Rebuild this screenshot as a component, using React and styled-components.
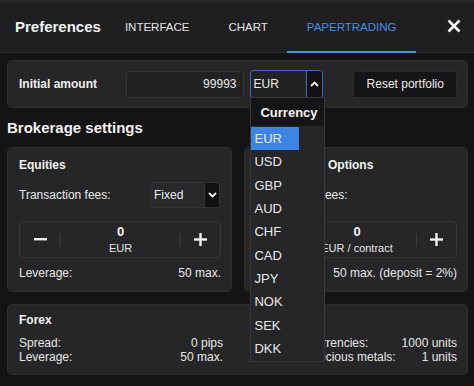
import React from "react";
import styled, { createGlobalStyle } from "styled-components";

const Global = createGlobalStyle`
  html, body { margin: 0; padding: 0; background: #141416; }
  body { font-family: "Liberation Sans", Arial, sans-serif; color: #e8e8e8; width: 474px; height: 386px; overflow: hidden; }
  * { box-sizing: border-box; }
`;

const TopStrip = styled.div`
  height: 2px;
  background: #2a2a2c;
`;

const Header = styled.div`
  display: flex;
  align-items: stretch;
  height: 51px;
  padding-left: 15px;
  background: #1f1f21;
  border-bottom: 1px solid #2f2f31;
`;

const Title = styled.div`
  display: flex;
  align-items: center;
  font-size: 15px;
  font-weight: bold;
  color: #f2f2f2;
  margin-right: 4px;
  padding-bottom: 2px;
`;

const Tab = styled.div`
  display: flex;
  align-items: center;
  padding: 0 19px 0 20px;
  font-size: 11.5px;
  color: ${p => (p.$active ? "#4a8fe0" : "#e4e4e4")};
  border-bottom: 2px solid ${p => (p.$active ? "#4a8fe0" : "transparent")};
  margin-bottom: -1px;
`;

const Close = styled.div`
  margin-left: auto;
  display: flex;
  align-items: center;
  padding-right: 13px;
  padding-bottom: 2px;
`;

const Body = styled.div`
  padding: 7px 6px 0 7px;
`;

const Card = styled.div`
  background: #262628;
  border: 1px solid #2e2e30;
  border-radius: 5px;
  padding: ${p => p.$pad || "9px 10px 11px 11px"};
`;

const AmountCard = styled(Card)`
  display: flex;
  align-items: center;
  height: 48px;
  padding: 0 10px 0 11px;
`;

const BoldLabel = styled.div`
  font-size: 12px;
  font-weight: bold;
  color: #f0f0f0;
  width: ${p => p.$w || "auto"};
  flex-shrink: 0;
`;

const AmountInput = styled.div`
  width: 119px;
  height: 27px;
  background: #222224;
  border: 1px solid #333335;
  border-radius: 3px;
  display: flex;
  align-items: center;
  justify-content: flex-end;
  padding-right: 7px;
  font-size: 12px;
  color: #e8e8e8;
`;

const SelectWrap = styled.div`
  position: relative;
  margin-left: 6px;
`;

const Select = styled.div`
  display: flex;
  width: ${p => p.$w};
  height: ${p => p.$h};
  border: 1px solid ${p => (p.$open ? "#3a6dc0" : "#333335")};
  border-radius: 3px;
  background: ${p => (p.$open ? "#222224" : "#29292b")};
  overflow: hidden;
  font-size: 12px;
  color: #ececec;
`;

const SelectText = styled.div`
  flex: 1;
  display: flex;
  align-items: center;
  padding-left: ${p => p.$pl || "2px"};
`;

const SelectArrow = styled.div`
  width: ${p => p.$w || "16px"};
  display: flex;
  align-items: center;
  justify-content: center;
  background: #111113;
  border-left: 1px solid ${p => (p.$open ? "#3a6dc0" : "#333335")};
`;

const Menu = styled.div`
  position: absolute;
  top: 27px;
  left: 0;
  width: 75px;
  background: #262628;
  border: 1px solid #38383a;
  z-index: 10;
  padding-bottom: 1px;
`;

const MenuHeader = styled.div`
  height: 28px;
  display: flex;
  align-items: center;
  padding-left: 9px;
  background: #151517;
  font-size: 13px;
  font-weight: bold;
  color: #f4f4f4;
`;

const MenuItem = styled.div`
  height: 23.3px;
  width: 48px;
  display: flex;
  align-items: center;
  padding-left: 3px;
  font-size: 13px;
  color: #e8e8e8;
  background: ${p => (p.$sel ? "#3d84e3" : "transparent")};
  margin-top: ${p => (p.$first ? "1px" : "0")};
`;

const ResetButton = styled.div`
  margin-left: 30px;
  width: 104px;
  height: 27px;
  background: #151517;
  border: 1px solid #2c2c2e;
  border-radius: 3px;
  display: flex;
  align-items: center;
  justify-content: center;
  font-size: 12px;
  color: #ececec;
`;

const SectionTitle = styled.div`
  font-size: 15px;
  font-weight: bold;
  color: #f2f2f2;
  line-height: 20px;
  margin: 10px 0 9px 0;
`;

const Grid = styled.div`
  display: grid;
  grid-template-columns: 225px 224px;
  column-gap: 12px;
`;

const CardTitle = styled.div`
  font-size: 12px;
  font-weight: bold;
  color: #f2f2f2;
  line-height: 16px;
`;

const FeeRow = styled.div`
  display: flex;
  align-items: center;
  height: 26px;
  margin-top: 9px;
  font-size: 12px;
`;

const FeeLabel = styled.div`
  width: 131px;
`;

const Stepper = styled.div`
  display: grid;
  grid-template-columns: 41px 1fr 40px;
  height: 37px;
  margin-top: 13px;
  border: 1px solid #363638;
  border-radius: 5px;
  align-items: center;
`;

const StepButton = styled.div`
  display: flex;
  align-items: center;
  justify-content: center;
  height: 12px;
  border-${p => p.$side}: 1px solid #3a3a3c;
`;

const StepValue = styled.div`
  display: flex;
  flex-direction: column;
  align-items: center;
  line-height: 14px;
`;

const StepNum = styled.div`
  font-size: 13px;
  font-weight: bold;
  color: #f4f4f4;
`;

const StepUnit = styled.div`
  font-size: 11px;
  color: #e4e4e4;
  margin-top: 2px;
`;

const InfoRow = styled.div`
  display: flex;
  justify-content: space-between;
  font-size: 12px;
  line-height: 14px;
  margin-top: ${p => p.$mt || "0"};
  color: #e6e6e6;
`;

const ForexCard = styled(Card)`
  margin-top: 12px;
  padding: 7px 10px 10px 11px;
`;

const ForexGrid = styled.div`
  display: grid;
  grid-template-columns: 204px 150px;
  justify-content: space-between;
  margin-top: 8px;
`;

const Minus = () => (
  <svg width="13" height="3" viewBox="0 0 13 3"><rect width="13" height="2.4" fill="#f2f2f2" /></svg>
);
const Plus = () => (
  <svg width="13" height="13" viewBox="0 0 13 13">
    <rect x="5.3" width="2.4" height="13" fill="#f2f2f2" />
    <rect y="5.3" width="13" height="2.4" fill="#f2f2f2" />
  </svg>
);
const Chevron = ({ up }) => (
  <svg width="9" height="6" viewBox="0 0 9 6">
    <path d={up ? "M1 5 L4.5 1.5 L8 5" : "M1 1 L4.5 4.5 L8 1"} stroke="#f2f2f2" strokeWidth="1.8" fill="none" />
  </svg>
);

function StepperBox({ unit }) {
  return (
    <Stepper>
      <StepButton $side="right"><Minus /></StepButton>
      <StepValue>
        <StepNum>0</StepNum>
        <StepUnit>{unit}</StepUnit>
      </StepValue>
      <StepButton $side="left"><Plus /></StepButton>
    </Stepper>
  );
}

const currencies = ["EUR", "USD", "GBP", "AUD", "CHF", "CAD", "JPY", "NOK", "SEK", "DKK"];

export default function App() {
  return (
    <>
      <Global />
      <TopStrip />
      <Header>
        <Title>Preferences</Title>
        <Tab>INTERFACE</Tab>
        <Tab>CHART</Tab>
        <Tab $active>PAPERTRADING</Tab>
        <Close>
          <svg width="14" height="14" viewBox="0 0 14 14">
            <path d="M1.5 1.5 L12.5 12.5 M12.5 1.5 L1.5 12.5" stroke="#f4f4f4" strokeWidth="2.6" />
          </svg>
        </Close>
      </Header>
      <Body>
        <AmountCard>
          <BoldLabel $w="107px">Initial amount</BoldLabel>
          <AmountInput>99993</AmountInput>
          <SelectWrap>
            <Select $w="73px" $h="28px" $open>
              <SelectText>EUR</SelectText>
              <SelectArrow $open><Chevron up /></SelectArrow>
            </Select>
            <Menu>
              <MenuHeader>Currency</MenuHeader>
              {currencies.map((c, i) => (
                <MenuItem key={c} $sel={i === 0} $first={i === 0}>{c}</MenuItem>
              ))}
            </Menu>
          </SelectWrap>
          <ResetButton>Reset portfolio</ResetButton>
        </AmountCard>

        <SectionTitle>Brokerage settings</SectionTitle>

        <Grid>
          <Card>
            <CardTitle>Equities</CardTitle>
            <FeeRow>
              <FeeLabel>Transaction fees:</FeeLabel>
              <Select $w="70px" $h="26px">
                <SelectText $pl="3px">Fixed</SelectText>
                <SelectArrow $w="15px"><Chevron /></SelectArrow>
              </Select>
            </FeeRow>
            <StepperBox unit="EUR" />
            <InfoRow $mt="8px"><span>Leverage:</span><span>50 max.</span></InfoRow>
          </Card>
          <Card>
            <CardTitle>Futures and Options</CardTitle>
            <FeeRow>
              <FeeLabel>Transaction fees:</FeeLabel>
            </FeeRow>
            <StepperBox unit="EUR / contract" />
            <InfoRow $mt="8px"><span>Leverage:</span><span>50 max. (deposit = 2%)</span></InfoRow>
          </Card>
        </Grid>

        <ForexCard>
          <CardTitle>Forex</CardTitle>
          <ForexGrid>
            <div>
              <InfoRow><span>Spread:</span><span>0 pips</span></InfoRow>
              <InfoRow><span>Leverage:</span><span>50 max.</span></InfoRow>
            </div>
            <div>
              <InfoRow><span>Currencies:</span><span>1000 units</span></InfoRow>
              <InfoRow><span>Precious metals:</span><span>1 units</span></InfoRow>
            </div>
          </ForexGrid>
        </ForexCard>
      </Body>
    </>
  );
}
